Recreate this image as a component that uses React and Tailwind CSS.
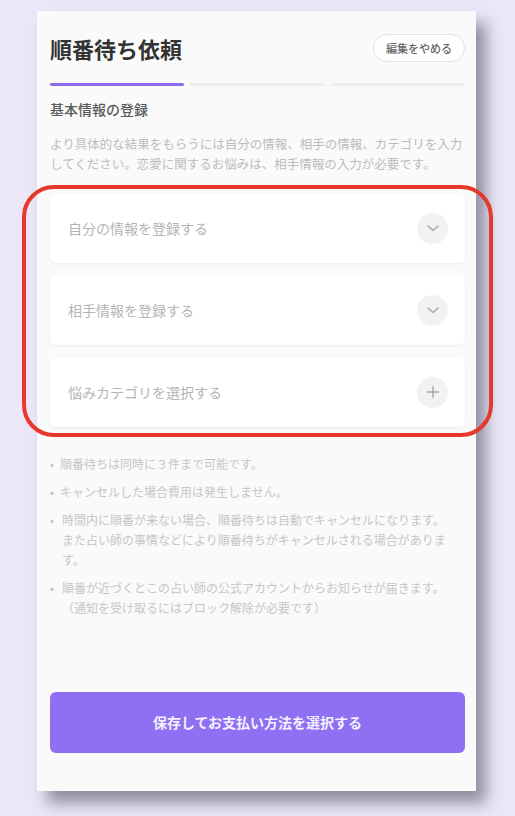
import React from 'react';

const font = { fontFamily: '"Noto Sans CJK JP", "Noto Sans", sans-serif' };

const Chevron = () => (
  <svg width="16" height="16" viewBox="0 0 16 16" fill="none">
    <path d="M3 6l5 4.5L13 6" stroke="#a8a8a8" strokeWidth="1.5" strokeLinecap="round" strokeLinejoin="round" />
  </svg>
);

const Plus = () => (
  <svg width="16" height="16" viewBox="0 0 16 16" fill="none">
    <path d="M8 2.5v11M2.5 8h11" stroke="#a8a8a8" strokeWidth="1.5" strokeLinecap="round" />
  </svg>
);

const sections = [
  { label: '自分の情報を登録する', icon: <Chevron /> },
  { label: '相手情報を登録する', icon: <Chevron /> },
  { label: '悩みカテゴリを選択する', icon: <Plus /> },
];

// 3つ目以降は先頭に少し余白がある
const notes = [
  { text: '順番待ちは同時に３件まで可能です。', indent: false },
  { text: 'キャンセルした場合費用は発生しません。', indent: false },
  { text: '時間内に順番が来ない場合、順番待ちは自動でキャンセルになります。また占い師の事情などにより順番待ちがキャンセルされる場合があります。', indent: true },
  { text: '順番が近づくとこの占い師の公式アカウントからお知らせが届きます。（通知を受け取るにはブロック解除が必要です）', indent: true },
];

export default function App() {
  return (
    <div className="relative h-[816px] w-full overflow-hidden bg-[#ebe7f7] pt-[11px]" style={font}>
      <div className="ml-[37px] flex h-[780px] w-[439px] flex-col bg-[#fafafa] pl-[13px] pr-[11px] shadow-[10px_12px_14px_rgba(70,70,90,0.55)]">
        <div className="mt-[23px] flex items-center justify-between">
          <h1 className="text-[22px] font-bold leading-[28px] text-[#333]">順番待ち依頼</h1>
          <button className="h-[28px] rounded-full border border-[#e2e2e2] bg-white px-[12px] text-[11px] font-medium text-[#666]">
            編集をやめる
          </button>
        </div>

        <div className="mt-[21px] flex gap-[6px]">
          <div className="h-[3px] flex-1 rounded-full bg-[#8b6cf0]" />
          <div className="h-[3px] flex-1 rounded-full bg-[#ededed]" />
          <div className="h-[3px] flex-1 rounded-full bg-[#ededed]" />
        </div>

        <h2 className="mt-[13px] text-[14px] font-medium leading-[20px] text-[#5a5a5a]">基本情報の登録</h2>
        <p className="mt-[15px] text-[12.5px] leading-[19.5px] text-[#bcbcbc]">
          より具体的な結果をもらうには自分の情報、相手の情報、カテゴリを入力してください。恋愛に関するお悩みは、相手情報の入力が必要です。
        </p>

        <div className="mt-[20px] flex flex-col gap-[12px]">
          {sections.map((s) => (
            <div
              key={s.label}
              className="flex h-[70px] items-center justify-between rounded-[6px] bg-white pl-[18px] pr-[17px] shadow-[0_1px_3px_rgba(0,0,0,0.06)]"
            >
              <span className="text-[14px] text-[#b5b5b5]">{s.label}</span>
              <div className="flex h-[31px] w-[31px] items-center justify-center rounded-full bg-[#f2f2f2]">{s.icon}</div>
            </div>
          ))}
        </div>

        <ul className="mt-[27px] flex flex-col gap-[8px] pr-[10px]">
          {notes.map((n) => (
            <li key={n.text} className="flex text-[12px] leading-[20px] text-[#c6c6c6]">
              <span className="w-[10px] shrink-0">•</span>
              <span className={n.indent ? 'pl-[2px]' : ''}>{n.text}</span>
            </li>
          ))}
        </ul>

        <button className="mb-[38px] mt-auto h-[61px] w-full rounded-[6px] bg-[#8f70f2] text-[14px] font-bold text-[#f3f0ff]">
          保存してお支払い方法を選択する
        </button>
      </div>

      <div className="pointer-events-none absolute left-[22px] top-[185px] h-[252px] w-[471px] rounded-[32px] border-[4px] border-[#e5392b]" />
    </div>
  );
}
